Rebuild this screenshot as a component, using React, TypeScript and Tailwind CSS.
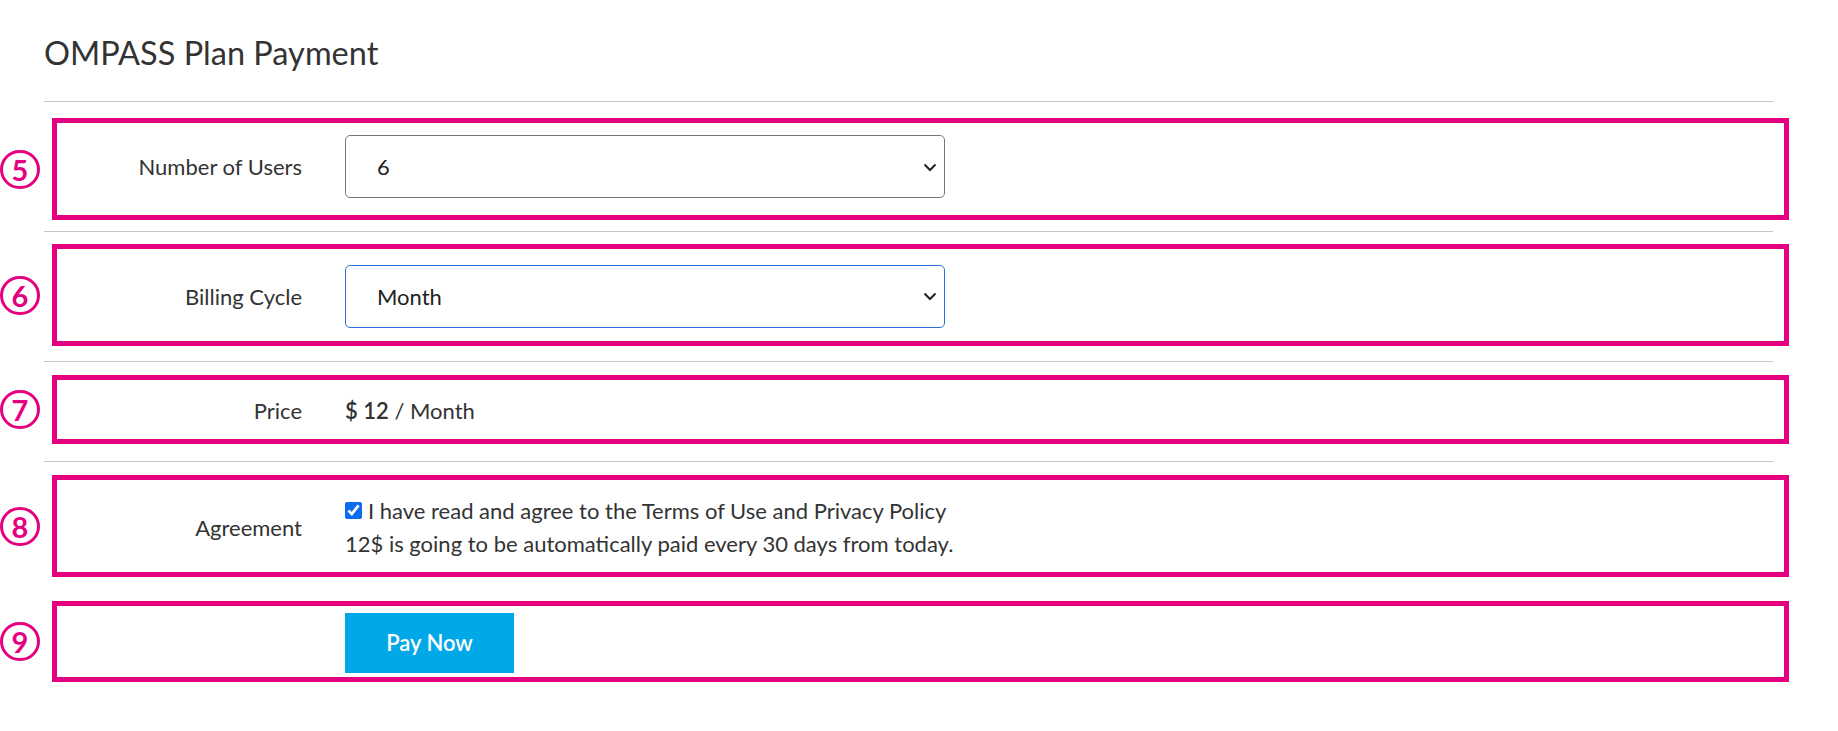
import React from "react";

const PINK = "border-[#e5007f]";

function Num({ n }: { n: string }) {
  return (
    <div className="w-[52px] shrink-0 flex items-center">
      <div className="w-[40px] h-[39px] rounded-full border-[3px] border-[#e5007f] flex items-center justify-center text-[#e5007f] text-[29px] font-bold leading-none">
        {n}
      </div>
    </div>
  );
}

function Chevron() {
  return (
    <svg className="pointer-events-none absolute right-[8px] top-1/2 -translate-y-1/2" width="14" height="10" viewBox="0 0 14 10">
      <path d="M1.5 2.5 L7 8 L12.5 2.5" fill="none" stroke="#222" strokeWidth="2" />
    </svg>
  );
}

function Sel({ value, options, focus }: { value: string; options: string[]; focus?: boolean }) {
  return (
    <div className="relative w-[600px] h-[63px]">
      <select
        defaultValue={value}
        className={`appearance-none w-full h-full bg-white rounded-[5px] border pl-[31px] text-[22px] text-[#222] outline-none ${
          focus ? "border-[#2a6fdb]" : "border-[#767676]"
        }`}
      >
        {options.map((o) => (
          <option key={o}>{o}</option>
        ))}
      </select>
      <Chevron />
    </div>
  );
}

function Label({ children }: { children: React.ReactNode }) {
  return <div className="w-[245px] shrink-0 text-right text-[22px] text-[#333]">{children}</div>;
}

function Hr() {
  return <div className="ml-[44px] w-[1729px] h-px bg-[#c6c6c6]" />;
}

export default function App() {
  return (
    <div
      className="w-[1838px] h-[731px] bg-white text-[#333] overflow-hidden"
      style={{ fontFamily: "Lato, 'Noto Sans', sans-serif" }}
    >
      <div className="pl-[44px] pt-[33px] h-[101px]">
        <h1 className="text-[32.5px] leading-[40px] font-normal text-[#333]">OMPASS Plan Payment</h1>
      </div>
      <Hr />
      <div className="flex items-center mt-[16px] mb-[11px]">
        <Num n="5" />
        <div className={`w-[1737px] h-[102px] border-[5px] ${PINK} flex items-center pb-[5px]`}>
          <Label>Number of Users</Label>
          <div className="ml-[43px]">
            <Sel value="6" options={["1", "2", "3", "4", "5", "6", "7", "8", "9", "10"]} />
          </div>
        </div>
      </div>
      <Hr />
      <div className="flex items-center mt-[12px] mb-[15px]">
        <Num n="6" />
        <div className={`w-[1737px] h-[102px] border-[5px] ${PINK} flex items-center pt-[2px]`}>
          <Label>Billing Cycle</Label>
          <div className="ml-[43px]">
            <Sel value="Month" options={["Month", "Year"]} focus />
          </div>
        </div>
      </div>
      <Hr />
      <div className="flex items-center mt-[13px] mb-[17px]">
        <Num n="7" />
        <div className={`w-[1737px] h-[69px] border-[5px] ${PINK} flex items-center pt-[2px]`}>
          <Label>Price</Label>
          <div className="ml-[43px] text-[22px] text-[#333]">
            <span className="font-semibold">$ 12</span> / Month
          </div>
        </div>
      </div>
      <Hr />
      <div className="flex items-center mt-[13px]">
        <Num n="8" />
        <div className={`w-[1737px] h-[102px] border-[5px] ${PINK} flex items-center pt-[2px]`}>
          <Label>Agreement</Label>
          <div className="ml-[43px] text-[22px] leading-[33px] text-[#333]">
            <div className="flex items-center">
              <input type="checkbox" defaultChecked className="w-[17px] h-[17px] m-0 mr-[6px] accent-[#0b6cf0]" />
              <span>I have read and agree to the Terms of Use and Privacy Policy</span>
            </div>
            <div>12$ is going to be automatically paid every 30 days from today.</div>
          </div>
        </div>
      </div>
      <div className="flex items-center mt-[24px]">
        <Num n="9" />
        <div className={`w-[1737px] h-[81px] border-[5px] ${PINK} flex items-center pt-[2px]`}>
          <div className="w-[245px] shrink-0" />
          <div className="ml-[43px]">
            <button className="w-[169px] h-[60px] bg-[#00a8e8] text-white text-[22px] font-semibold">Pay Now</button>
          </div>
        </div>
      </div>
    </div>
  );
}
